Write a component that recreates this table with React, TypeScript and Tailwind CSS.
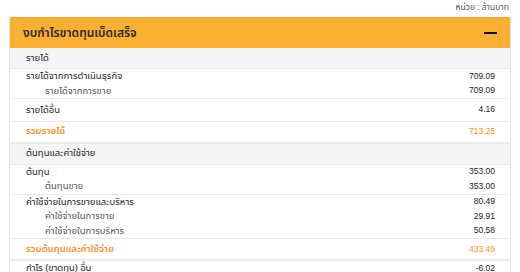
import React from "react"

type Line = { label: string; value?: string; sub?: boolean }

type Block =
  | { kind: "section"; label: string }
  | { kind: "group"; lines: Line[]; tight?: boolean }
  | { kind: "total"; label: string; value: string }

const BLOCKS: Block[] = [
  { kind: "section", label: "รายได้" },
  {
    kind: "group",
    lines: [
      { label: "รายได้จากการดำเนินธุรกิจ", value: "709.09" },
      { label: "รายได้จากการขาย", value: "709.09", sub: true },
    ],
  },
  { kind: "group", lines: [{ label: "รายได้อื่น", value: "4.16" }] },
  { kind: "total", label: "รวมรายได้", value: "713.25" },
  { kind: "section", label: "ต้นทุนและค่าใช้จ่าย" },
  {
    kind: "group",
    lines: [
      { label: "ต้นทุน", value: "353.00" },
      { label: "ต้นทุนขาย", value: "353.00", sub: true },
    ],
  },
  {
    kind: "group",
    lines: [
      { label: "ค่าใช้จ่ายในการขายและบริหาร", value: "80.49" },
      { label: "ค่าใช้จ่ายในการขาย", value: "29.91", sub: true },
      { label: "ค่าใช้จ่ายในการบริหาร", value: "50.58", sub: true },
    ],
  },
  { kind: "total", label: "รวมต้นทุนและค่าใช้จ่าย", value: "433.49" },
  { kind: "group", tight: true, lines: [{ label: "กำไร (ขาดทุน) อื่น", value: "-6.02" }] },
]

const FONT = { fontFamily: "Tahoma, 'Noto Sans Thai', 'Noto Sans', sans-serif" }

function Num({ v, className }: { v?: string; className?: string }) {
  return (
    <span className={`font-['Liberation_Sans',Arial,sans-serif] text-[8.5px] ${className ?? ""}`}>{v}</span>
  )
}

export default function App() {
  return (
    <div className="h-[272px] w-[520px] overflow-hidden bg-white text-[#222]" style={FONT}>
      {/* unit */}
      <div className="flex h-[17px] items-center justify-end pr-[11px] text-[8.5px] text-[#555]">
        หน่วย : ล้านบาท
      </div>

      <div className="mx-[9px] border-x border-[#e6e6e6]">
        {/* Header */}
        <div className="flex h-[31px] items-center justify-between border-t border-[#f4a623] bg-[#fbb034] pl-[13px] pr-[13px]">
          <h3 className="text-[12px] font-semibold text-[#2a2a2a]">งบกำไรขาดทุนเบ็ดเสร็จ</h3>
          <span className="block h-[2px] w-[13px] bg-[#111]" />
        </div>

        {/* Rows */}
        {BLOCKS.map((b, i) => {
          if (b.kind === "section")
            return (
              <div
                key={i}
                className="flex h-[21px] items-center border-b border-[#e8e8e8] bg-[#f5f5f5] pl-[16px] text-[9.5px]"
              >
                {b.label}
              </div>
            )
          if (b.kind === "total")
            return (
              <div
                key={i}
                className="flex h-[22px] items-center justify-between border-b-2 border-[#ececec] pl-[16px] pr-[15px] text-[9.5px] font-semibold text-[#f7901e]"
              >
                <span>{b.label}</span>
                <Num v={b.value} className="font-normal" />
              </div>
            )
          const single = b.lines.length === 1 && !b.tight
          return (
            <div key={i} className={`border-b border-[#e8e8e8] ${single ? "py-[3.5px]" : ""}`}>
              {b.lines.map((l, j) => (
                <div key={j} className="flex h-[14.5px] items-center justify-between pr-[15px] text-[9.5px]">
                  <span className={l.sub ? "pl-[35px] text-[#555]" : "pl-[16px]"}>{l.label}</span>
                  <Num v={l.value} />
                </div>
              ))}
            </div>
          )
        })}
      </div>
    </div>
  )
}
